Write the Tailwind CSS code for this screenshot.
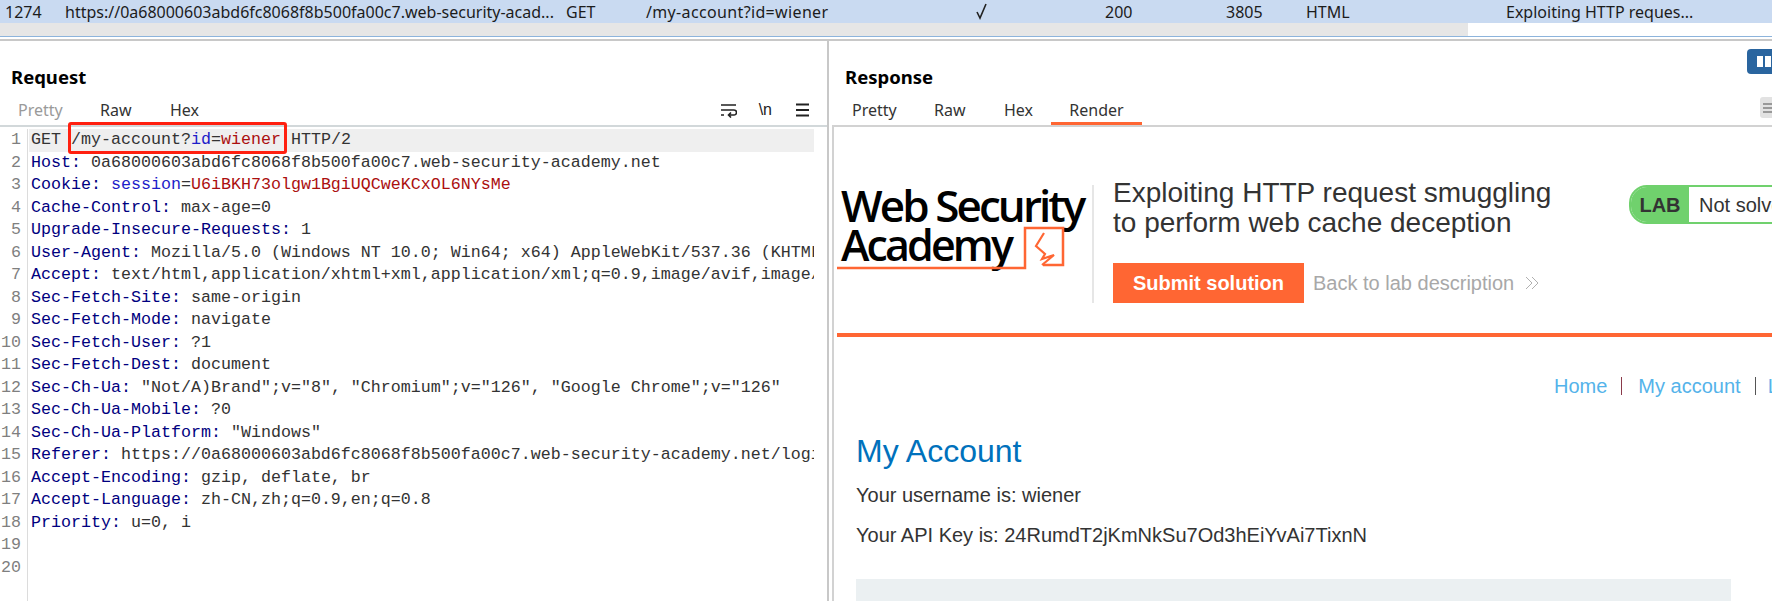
<!DOCTYPE html>
<html lang="en">
<head>
    <meta charset="UTF-8">
    <title>Exploiting HTTP request smuggling</title>
    <script src="https://cdn.jsdelivr.net/npm/@tailwindcss/browser@4"></script>
</head>
<body class="bg-white w-[1772px] h-[601px] overflow-hidden flex flex-col font-['Noto_Sans',sans-serif]">

    <!-- selected history row -->
    <div class="h-[23px] shrink-0 bg-[#c9daf1] flex items-center text-[16px] text-[#1c1c1c] whitespace-nowrap">
        <div class="w-[65px] pl-[5px]">1274</div>
        <div class="w-[501px]">https://0a68000603abd6fc8068f8b500fa00c7.web-security-acad...</div>
        <div class="w-[80px]">GET</div>
        <div class="w-[330px] tracking-[0.35px]">/my-account?id=wiener</div>
        <div class="w-[129px]">
            <svg width="13" height="17" viewBox="0 0 13 17" fill="none" stroke="#222" stroke-width="1.6"><path d="M1 9l3 6 6-14"/></svg>
        </div>
        <div class="w-[121px]">200</div>
        <div class="w-[80px]">3805</div>
        <div class="w-[200px]">HTML</div>
        <div>Exploiting HTTP reques...</div>
    </div>
    <div class="h-[14px] shrink-0 flex border-b border-[#8db4dc]">
        <div class="w-[1468px] bg-[#e6e6e6]"></div>
    </div>
    <div class="h-[2px] shrink-0"></div>
    <div class="h-[2px] shrink-0 bg-[#c8c8c8]"></div>

    <div class="flex flex-1 min-h-0">
        <!-- request panel -->
        <div class="w-[827px] shrink-0 flex flex-col min-h-0">
            <div class="h-[28px] mt-[22px] pl-[11px] text-[18.5px] font-bold text-black leading-[28px]">Request</div>
            <div class="h-[33px] mt-[1px] pt-[2px] flex items-center text-[16px] text-[#333] pr-[15px]">
                <span class="w-[82px] ml-[18px] text-[#9a9a9a]">Pretty</span>
                <span class="w-[70px]">Raw</span>
                <span>Hex</span>
                <div class="ml-auto flex items-center gap-[22px] text-[#222]">
                    <svg width="16" height="16" viewBox="0 0 16 16" fill="none" stroke="#222" stroke-width="1.6"><path d="M0 3h15M0 8h13a2.500 2.500 0 0 1 0 5H8M10 10.500L7.500 13l2.500 2.500M0 13h3"/></svg>
                    <span class="font-['Liberation_Sans',sans-serif] text-[16px] leading-none">\n</span>
                    <svg width="18" height="14" viewBox="0 0 18 14" fill="none" stroke="#222" stroke-width="1.8"><path d="M2 1.500h13M2 7h13M2 12.500h13"/></svg>
                </div>
            </div>
            <div class="flex-1 min-h-0 relative border-t-2 border-[#d2d8da] flex font-['Liberation_Mono',monospace] text-[16.67px] leading-[22.5px] text-[#333] whitespace-nowrap pt-[2px]">
                <div class="w-[28px] shrink-0 border-r border-[#dcdcdc] text-right pr-[6px] text-[#7f7f7f]">
                    <div>1</div><div>2</div><div>3</div><div>4</div><div>5</div><div>6</div><div>7</div><div>8</div><div>9</div><div>10</div><div>11</div><div>12</div><div>13</div><div>14</div><div>15</div><div>16</div><div>17</div><div>18</div><div>19</div><div>20</div>
                </div>
                <div class="w-[785px] ml-[1px] overflow-hidden pl-[2px]">
                    <div class="bg-[#efefef] -ml-[2px] pl-[2px]">GET /my-account?<span class="text-[#1d1dc9]">id</span>=<span class="text-[#ab0f0f]">wiener</span> HTTP/2</div>
                    <div><span class="text-[#000080]">Host:</span> 0a68000603abd6fc8068f8b500fa00c7.web-security-academy.net</div>
                    <div><span class="text-[#000080]">Cookie:</span> <span class="text-[#1d1dc9]">session</span>=<span class="text-[#ab0f0f]">U6iBKH73olgw1BgiUQCweKCxOL6NYsMe</span></div>
                    <div><span class="text-[#000080]">Cache-Control:</span> max-age=0</div>
                    <div><span class="text-[#000080]">Upgrade-Insecure-Requests:</span> 1</div>
                    <div><span class="text-[#000080]">User-Agent:</span> Mozilla/5.0 (Windows NT 10.0; Win64; x64) AppleWebKit/537.36 (KHTML, like Gecko)</div>
                    <div><span class="text-[#000080]">Accept:</span> text/html,application/xhtml+xml,application/xml;q=0.9,image/avif,image/webp</div>
                    <div><span class="text-[#000080]">Sec-Fetch-Site:</span> same-origin</div>
                    <div><span class="text-[#000080]">Sec-Fetch-Mode:</span> navigate</div>
                    <div><span class="text-[#000080]">Sec-Fetch-User:</span> ?1</div>
                    <div><span class="text-[#000080]">Sec-Fetch-Dest:</span> document</div>
                    <div><span class="text-[#000080]">Sec-Ch-Ua:</span> "Not/A)Brand";v="8", "Chromium";v="126", "Google Chrome";v="126"</div>
                    <div><span class="text-[#000080]">Sec-Ch-Ua-Mobile:</span> ?0</div>
                    <div><span class="text-[#000080]">Sec-Ch-Ua-Platform:</span> "Windows"</div>
                    <div><span class="text-[#000080]">Referer:</span> https://0a68000603abd6fc8068f8b500fa00c7.web-security-academy.net/login</div>
                    <div><span class="text-[#000080]">Accept-Encoding:</span> gzip, deflate, br</div>
                    <div><span class="text-[#000080]">Accept-Language:</span> zh-CN,zh;q=0.9,en;q=0.8</div>
                    <div><span class="text-[#000080]">Priority:</span> u=0, i</div>
                </div>
                <!-- annotation drawn over the request line -->
                <div class="absolute left-[68px] top-[-5px] w-[219px] h-[32px] border-[3px] border-[#ff2010] rounded-[3px]"></div>
            </div>
        </div>

        <div class="w-[2px] shrink-0 bg-[#c8c8c8]"></div>

        <!-- response panel -->
        <div class="flex-1 min-w-0 min-h-0 relative flex flex-col overflow-hidden">
            <div class="h-[28px] mt-[22px] pl-[16px] text-[18.5px] font-bold text-black leading-[28px]">Response</div>
            <div class="h-[33px] mt-[1px] flex items-center text-[16px] text-[#333]">
                <span class="w-[82px] ml-[23px] pt-[2px]">Pretty</span>
                <span class="w-[70px] pt-[2px]">Raw</span>
                <span class="w-[47px] pt-[2px]">Hex</span>
                <span class="w-[91px] h-full flex items-center justify-center border-b-[3px] border-[#ff6633] pt-[5px]">Render</span>
            </div>
            <!-- panel layout buttons -->
            <div class="absolute left-[918px] top-[8px] w-[30px] h-[25px] rounded-[4px] bg-[#2a659f] flex gap-[2px] pl-[10px] pt-[7px]">
                <div class="w-[6px] h-[11px] bg-white"></div><div class="w-[6px] h-[11px] bg-white"></div>
            </div>
            <div class="absolute left-[931px] top-[56px] w-[20px] h-[21px] rounded-[3px] bg-[#e2e2e2] flex flex-col gap-[2px] pl-[3px] pt-[6px]">
                <div class="h-[2px] bg-[#999]"></div><div class="h-[2px] bg-[#999]"></div><div class="h-[2px] bg-[#999]"></div>
            </div>

            <div class="flex-1 min-h-0 ml-[3px] border-t-2 border-l-2 border-[#d2d2d2] font-['Liberation_Sans',sans-serif] overflow-hidden">
                <div class="w-[1000px]">
                    <div class="flex pt-[58px] pl-[3px]">
                        <div class="w-[255px] h-[118px] shrink-0 relative text-black font-['Open_Sans',sans-serif] font-semibold tracking-[-2.9px] leading-none">
                            <div class="pl-[4px] text-[44px] leading-[40px] whitespace-nowrap">Web Security</div>
                            <div class="pl-[4px] text-[43px] leading-[40px]">Academy</div>
                            <svg class="absolute left-0 top-[41px]" width="230" height="46" viewBox="0 0 230 46" fill="none" stroke="#ff6633" stroke-width="2.500">
                                <path d="M0 42h188V2h38v37h-20"/>
                                <path d="M207 7L199 20L208 28L205 33L217 29L205 39" stroke-width="2.200"/>
                            </svg>
                        </div>
                        <div class="w-[2px] h-[118px] bg-[#e6e6e6] shrink-0"></div>
                        <div class="w-[516px] ml-[19px] shrink-0 flex flex-col">
                            <div class="text-[28px] leading-[30px] text-[#333] -mt-[7px] whitespace-nowrap">Exploiting HTTP request smuggling<br>to perform web cache deception</div>
                            <div class="flex items-center mt-[25px]">
                                <div class="w-[191px] h-[40px] bg-[#ff6633] text-white font-bold text-[20px] flex items-center justify-center">Submit solution</div>
                                <div class="ml-[9px] text-[20px] text-[#a8a8a8]">Back to lab description</div>
                                <svg class="ml-[10px]" width="16" height="16" viewBox="0 0 16 16" fill="none" stroke="#b0b0b0" stroke-width="1"><path d="M2 2l6 6-6 6M8 2l6 6-6 6"/></svg>
                            </div>
                        </div>
                        <div class="h-[39px] flex items-stretch rounded-l-[18px] border-2 border-[#70d16d] overflow-hidden shrink-0 w-[300px]">
                            <div class="w-[58px] bg-[#70d16d] text-[#333] font-bold text-[20px] flex items-center justify-center">LAB</div>
                            <div class="pl-[10px] text-[20px] text-[#333] flex items-center">Not solved</div>
                        </div>
                    </div>
                    <div class="h-[4px] bg-[#ff6633] ml-[3px] mt-[30px]"></div>
                    <div class="h-[24px] mt-[37px] flex items-center text-[20px] text-[#54b3ea] pl-[720px] whitespace-nowrap">
                        <span>Home</span>
                        <span class="w-[1px] h-[18px] shrink-0 bg-[#8a3a4a] ml-[14px] mr-[16px]"></span>
                        <span>My account</span>
                        <span class="w-[1px] h-[18px] shrink-0 bg-[#555] ml-[14px] mr-[12px]"></span>
                        <span>Log out</span>
                    </div>
                    <div class="pl-[22px] mt-[33px] text-[32px] leading-[40px] text-[#0071bc]">My Account</div>
                    <div class="pl-[22px] mt-[12px] text-[20px] leading-[24px] text-[#333]">Your username is: wiener</div>
                    <div class="pl-[22px] mt-[16px] text-[20px] leading-[24px] text-[#333]">Your API Key is: 24RumdT2jKmNkSu7Od3hEiYvAi7TixnN</div>
                    <div class="ml-[22px] mt-[32px] w-[875px] h-[60px] bg-[#ebf0f2]"></div>
                </div>
            </div>
        </div>
    </div>
</body>
</html>
